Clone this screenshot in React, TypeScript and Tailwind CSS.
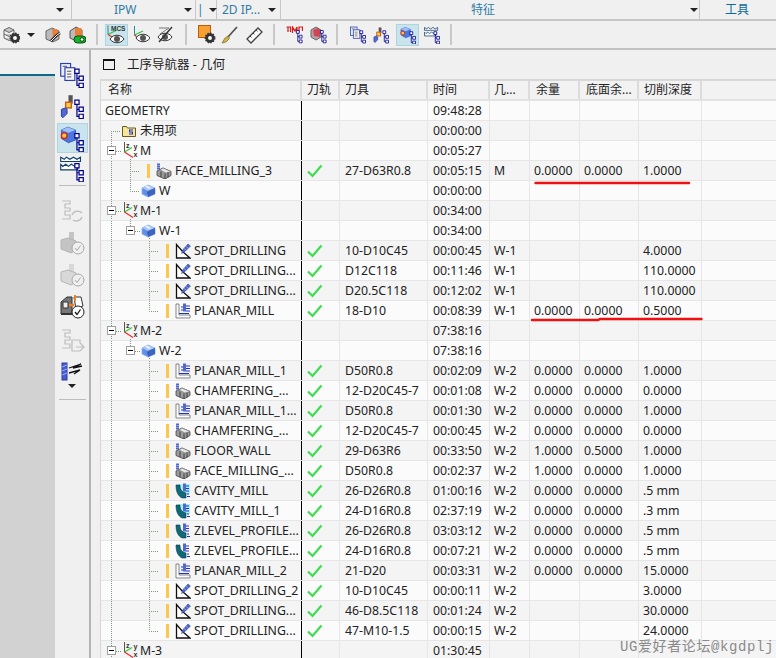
import React from "react";

const FONT = { fontFamily: '"Noto Sans","Noto Sans CJK SC",sans-serif' };

type Kind = "spot" | "planar" | "face" | "cavity" | "zlevel";
type Row = {
  n: string;
  k: "root" | "unused" | "mcs" | "wp" | "op";
  op?: Kind;
  t?: string;
  tm: string;
  g?: string;
  a?: string;
  b?: string;
  c?: string;
  lvl?: number;
};

const rows: Row[] = [
  { n: "GEOMETRY", k: "root", tm: "09:48:28" },
  { n: "未用项", k: "unused", tm: "00:00:00" },
  { n: "M", k: "mcs", tm: "00:05:27" },
  { n: "FACE_MILLING_3", k: "op", lvl: 1, op: "face", t: "27-D63R0.8", tm: "00:05:15", g: "M", a: "0.0000", b: "0.0000", c: "1.0000" },
  { n: "W", k: "wp", tm: "00:00:00" },
  { n: "M-1", k: "mcs", tm: "00:34:00" },
  { n: "W-1", k: "wp", tm: "00:34:00" },
  { n: "SPOT_DRILLING", k: "op", op: "spot", t: "10-D10C45", tm: "00:00:45", g: "W-1", c: "4.0000" },
  { n: "SPOT_DRILLING...", k: "op", op: "spot", t: "D12C118", tm: "00:11:46", g: "W-1", c: "110.0000" },
  { n: "SPOT_DRILLING...", k: "op", op: "spot", t: "D20.5C118", tm: "00:12:02", g: "W-1", c: "110.0000" },
  { n: "PLANAR_MILL", k: "op", op: "planar", t: "18-D10", tm: "00:08:39", g: "W-1", a: "0.0000", b: "0.0000", c: "0.5000" },
  { n: "M-2", k: "mcs", tm: "07:38:16" },
  { n: "W-2", k: "wp", tm: "07:38:16" },
  { n: "PLANAR_MILL_1", k: "op", op: "planar", t: "D50R0.8", tm: "00:02:09", g: "W-2", a: "0.0000", b: "0.0000", c: "1.0000" },
  { n: "CHAMFERING_...", k: "op", op: "face", t: "12-D20C45-7", tm: "00:01:08", g: "W-2", a: "0.0000", b: "0.0000", c: "0.0000" },
  { n: "PLANAR_MILL_1...", k: "op", op: "planar", t: "D50R0.8", tm: "00:01:30", g: "W-2", a: "0.0000", b: "0.0000", c: "1.0000" },
  { n: "CHAMFERING_...", k: "op", op: "face", t: "12-D20C45-7", tm: "00:00:45", g: "W-2", a: "0.0000", b: "0.0000", c: "0.0000" },
  { n: "FLOOR_WALL", k: "op", op: "face", t: "29-D63R6", tm: "00:33:50", g: "W-2", a: "1.0000", b: "0.5000", c: "1.0000" },
  { n: "FACE_MILLING_...", k: "op", op: "face", t: "D50R0.8", tm: "00:02:37", g: "W-2", a: "1.0000", b: "0.0000", c: "1.0000" },
  { n: "CAVITY_MILL", k: "op", op: "cavity", t: "26-D26R0.8", tm: "01:00:16", g: "W-2", a: "0.0000", b: "0.0000", c: ".5 mm" },
  { n: "CAVITY_MILL_1", k: "op", op: "cavity", t: "24-D16R0.8", tm: "02:37:19", g: "W-2", a: "0.0000", b: "0.0000", c: ".3 mm" },
  { n: "ZLEVEL_PROFILE...", k: "op", op: "zlevel", t: "26-D26R0.8", tm: "03:03:12", g: "W-2", a: "0.0000", b: "0.0000", c: ".5 mm" },
  { n: "ZLEVEL_PROFILE...", k: "op", op: "zlevel", t: "24-D16R0.8", tm: "00:07:21", g: "W-2", a: "0.0000", b: "0.0000", c: ".5 mm" },
  { n: "PLANAR_MILL_2", k: "op", op: "planar", t: "21-D20", tm: "00:03:31", g: "W-2", a: "0.0000", b: "0.0000", c: "15.0000" },
  { n: "SPOT_DRILLING_2", k: "op", op: "spot", t: "10-D10C45", tm: "00:00:11", g: "W-2", c: "3.0000" },
  { n: "SPOT_DRILLING...", k: "op", op: "spot", t: "46-D8.5C118", tm: "00:01:24", g: "W-2", c: "30.0000" },
  { n: "SPOT_DRILLING...", k: "op", op: "spot", t: "47-M10-1.5", tm: "00:00:15", g: "W-2", c: "24.0000" },
  { n: "M-3", k: "mcs", tm: "01:30:45" },
  { n: "", k: "root", tm: "" },
];

/* ---------- small icons ---------- */

function Tree({ c = "#00008b" }: { c?: string }) {
  return (
    <g fill="none" stroke={c} strokeWidth=".85">
      <path d="M4 3.500v8.500h1.500M4 7h1.500" />
      <path d="M2.500 .5h3v3h-3zM5.500 5.500h3v3h-3zM5.500 10.500h3v3h-3z" fill="#fff" />
    </g>
  );
}

function Axes() {
  const letter = { fontFamily: '"Liberation Sans",sans-serif', fontSize: 7, fontWeight: 700, fill: "#333" };
  return (
    <svg width="15" height="17" viewBox="0 0 15 17" className="shrink-0">
      <path d="M1.500 0v10" stroke="#555" strokeWidth="1" />
      <path d="M1.500 10 9 5.500" stroke="#3cc23c" strokeWidth="1.300" />
      <path d="M1.500 10 10 15.500" stroke="#e8303a" strokeWidth="1.300" />
      <text x="3" y="6" style={letter}>
        z
      </text>
      <text x="10.500" y="7" style={letter}>
        y
      </text>
      <text x="10.500" y="15" style={letter}>
        x
      </text>
    </svg>
  );
}

function Workpiece() {
  return (
    <svg width="15" height="15" viewBox="0 0 15 15" className="shrink-0">
      <path d="M1 5 7 2l7 3v6l-7 3-6-3z" fill="#5f8fe8" stroke="#8fb2ee" strokeWidth=".8" />
      <path d="M1 5l6 3 7-3-7-3z" fill="#a9c6f7" />
      <path d="M7 8v6l7-3V5z" fill="#3e66c0" />
      <path d="M4 3.500 8 6l2-1-4-2.500z" fill="#fff" opacity=".8" />
      <path d="M7 8.500v3" stroke="#29478f" strokeWidth="1" />
    </svg>
  );
}

function Folder() {
  return (
    <svg width="14" height="13" viewBox="0 0 14 13" className="shrink-0">
      <path d="M.5 2.500h4l1 1.500h8v8.500H.500z" fill="#f7e59a" stroke="#6a5a1a" />
      <path d="M7 5.500h4v1H8v1h3v3H7v-1h3v-1H7z" fill="#1f2fd0" />
    </svg>
  );
}

function OpIcon({ k }: { k: Kind }) {
  if (k === "spot")
    return (
      <svg width="16" height="16" viewBox="0 0 16 16" className="shrink-0">
        <path d="M1.500 1.500v13.500h13.500L8 9z" fill="#fff" stroke="#111" strokeWidth="1.300" />
        <path d="M6.500 10.500 8 6.500 13 1l2.500 2L10 8.500z" fill="#4f64c8" stroke="#33459f" strokeWidth=".5" />
        <path d="M9 5.500l2.500 2M11 3.500l2.500 2" stroke="#a8b6f0" strokeWidth=".7" />
      </svg>
    );
  if (k === "planar")
    return (
      <svg width="16" height="16" viewBox="0 0 16 16" className="shrink-0">
        <path d="M1 1v14h14v-3H4V1z" fill="#fff" stroke="#777" strokeWidth=".9" />
        <path d="M8 .500h3v8H8z" fill="#5168cc" />
        <path d="M6 4h2M6 7h2M11 3h4M11 5.500h4M11 8h4" stroke="#1a2fd8" strokeWidth="1" />
        <path d="M4 10.500h10" stroke="#1a2fd8" strokeWidth="1" />
      </svg>
    );
  if (k === "cavity" || k === "zlevel")
    return (
      <svg width="16" height="16" viewBox="0 0 16 16" className="shrink-0">
        {k === "cavity" && <path d="M3 1h12v10H3z" fill="#a6f0fa" />}
        <path d="M1 2h4c0 5 2 7 6 8v5H7C3 13 1 9 1 2z" fill="#0e6a78" stroke="#0a3b48" strokeWidth=".6" />
        <path d="M8 .500h3v8H8z" fill="#5168cc" />
        <path d="M11 3h3M11 5.500h3M11 8h3M12 11h2M12 13.500h3" stroke="#1a2fd8" strokeWidth="1" />
      </svg>
    );
  return (
    <svg width="16" height="16" viewBox="0 0 16 16" className="shrink-0">
      <path d="M1 .500h3v6H1z" fill="#5168cc" />
      <path d="M1 2.500h3M1 4.500h3" stroke="#a8b6f0" strokeWidth=".7" />
      <path d="M1 8 7 5l8 3.500v4L9 16l-8-3.500z" fill="#9c9c9c" stroke="#444" strokeWidth=".8" />
      <path d="M7 5 4 7l6 3 5-1.500z" fill="#e6e6e6" stroke="#666" strokeWidth=".5" />
      <path d="M9 10.500V16M5 8.500v5.500M12 9.500v5" stroke="#333" strokeWidth=".9" />
    </svg>
  );
}

function Check() {
  return (
    <svg width="16" height="14" viewBox="0 0 16 14" className="shrink-0">
      <path d="M1 7.500 5.500 12 14.500 1.500" fill="none" stroke="#3ddc51" strokeWidth="2.200" />
    </svg>
  );
}

function Caret({ className = "" }: { className?: string }) {
  return <span className={`inline-block w-0 h-0 border-l-[4px] border-r-[4px] border-t-[4px] border-l-transparent border-r-transparent border-t-[#222] ${className}`} />;
}

function Minus() {
  return (
    <span className="w-[9px] h-[9px] border border-[#a0a0a0] bg-white flex items-center justify-center shrink-0">
      <span className="w-[5px] h-px bg-black" />
    </span>
  );
}

function Warn() {
  return <span className="w-[2.5px] h-[14px] bg-[#fdc84a] shrink-0" />;
}

/* dotted tree guides of one row */
function Guides({ i, r }: { i: number; r: Row }) {
  const dot = "#7f9a7f";
  const segs: string[] = [];
  const lower = (x: number) => segs.push(`M${x}.5 0V20`);
  const y = 10.5;
  if (i >= 1 && i <= 28) {
    if (i === 1) segs.push(`M11.500 10V20M11 ${y}H21`);
    else if (r.k === "mcs") segs.push(`M11.500 0V6M11.500 15V20M16 ${y}H22`);
    else lower(11);
  }
  if (i === 2) segs.push("M30.500 18V20");
  if (i === 3) segs.push(`M30.500 0V20M30 ${y}H39`);
  if (i === 4) segs.push(`M30.500 0V${y}H39`);
  if (i === 5 || i === 11) segs.push("M30.500 18V20");
  if (r.k === "wp" && i !== 4) segs.push(`M30.500 0V6M35 ${y}H40M49.500 17V20`);
  if (i >= 7 && i <= 9) segs.push(`M49.500 0V20M49 ${y}H58`);
  if (i === 10 || i === 26) segs.push(`M49.500 0V${y}H58`);
  if (i >= 13 && i <= 25) segs.push(`M49.500 0V20M49 ${y}H58`);
  return (
    <svg width="70" height="20" className="absolute left-[-1px] top-0">
      <path d={segs.join("")} fill="none" stroke={dot} strokeWidth="1" strokeDasharray="1 1" />
    </svg>
  );
}

function NameCell({ r }: { r: Row }) {
  const text = <span className="whitespace-nowrap">{r.n}</span>;
  if (r.k === "root") return <div className="pl-[4px]">{text}</div>;
  if (r.k === "unused")
    return (
      <div className="pl-[21px] flex items-center gap-[4px]">
        <Folder />
        {text}
      </div>
    );
  if (r.k === "mcs")
    return (
      <div className="pl-[6px] flex items-center">
        <Minus />
        <span className="w-[7px]" />
        <Axes />
        <span className="w-[2px]" />
        {text}
      </div>
    );
  if (r.k === "wp")
    return (
      <div className={r.n === "W" ? "pl-[40px] flex items-center gap-[3px]" : "pl-[25px] flex items-center"}>
        {r.n !== "W" && <Minus />}
        {r.n !== "W" && <span className="w-[6px]" />}
        <Workpiece />
        {r.n !== "W" && <span className="w-[3px]" />}
        {text}
      </div>
    );
  const left = r.lvl === 1 ? "pl-[46px]" : "pl-[65px]";
  return (
    <div className={`${left} flex items-center`}>
      <Warn />
      <span className="w-[6.5px]" />
      <OpIcon k={r.op as Kind} />
      <span className="w-[3px]" />
      {text}
    </div>
  );
}

const cols = ["w-[40px]", "w-[50px]", "w-[59px]", "w-[63px]"];

function TableRow({ r, i }: { r: Row; i: number }) {
  const cell = "h-full flex items-center border-r border-[#e6e6e6] shrink-0";
  return (
    <div className={`flex h-5 border-b border-[#e6e6e6] text-[12.3px] leading-[12px] ${i % 2 ? "bg-[#f4f4f4]" : "bg-[#fbfbfb]"}`}>
      <div className="relative w-[201px] h-full flex items-center shrink-0 overflow-hidden border-r border-black">
        <Guides i={i} r={r} />
        <div className="relative">
          <NameCell r={r} />
        </div>
      </div>
      <div className={`${cell} w-[38px] pl-[5px]`}>{r.t && <Check />}</div>
      <div className={`${cell} w-[88px] pl-[5px]`}>{r.t}</div>
      <div className={`${cell} w-[62px] pl-[5px]`}>{r.tm}</div>
      <div className={`${cell} ${cols[0]} pl-[4px]`}>{r.g}</div>
      <div className={`${cell} ${cols[1]} pl-[4px]`}>{r.a}</div>
      <div className={`${cell} ${cols[2]} pl-[4px]`}>{r.b}</div>
      <div className={`${cell} ${cols[3]} pl-[4px]`}>{r.c}</div>
    </div>
  );
}

function HeaderCell({ children, w, pl = "pl-[5px]" }: { children?: React.ReactNode; w: string; pl?: string }) {
  return <div className={`${w} ${pl} h-full flex items-center border-r-2 border-[#dcdcdc] shrink-0 whitespace-nowrap`}>{children}</div>;
}

/* ---------- toolbar icons ---------- */

function Gear({ x, y, r = 3.5 }: { x: number; y: number; r?: number }) {
  return (
    <g>
      <circle cx={x} cy={y} r={r + 1.2} fill="#333" stroke="#333" strokeDasharray="1.500 1.200" strokeWidth="1.500" />
      <circle cx={x} cy={y} r={r * 0.55} fill="#fff" />
    </g>
  );
}

function Eye({ x = 0, y = 0 }: { x?: number; y?: number }) {
  return (
    <g transform={`translate(${x} ${y})`}>
      <path d="M0 5C3 0 11 0 14 5 11 10 3 10 0 5z" fill="#fff" stroke="#333" />
      <circle cx="7" cy="5" r="3" fill="#555" />
    </g>
  );
}

function Box({ w = 16, h = 18, children }: { w?: number; h?: number; children: React.ReactNode }) {
  return (
    <svg width={w} height={h} viewBox={`0 0 ${w} ${h}`} className="shrink-0">
      {children}
    </svg>
  );
}

const Sep = () => <span className="w-[2px] h-[21px] bg-[#c8c8c8] shrink-0" />;
const Active = ({ children }: { children: React.ReactNode }) => (
  <span className="w-[23px] h-[22px] bg-[#c9e4ec] border border-[#b0d4df] flex items-center justify-center shrink-0">{children}</span>
);

function StackGear() {
  return (
    <Box w={17} h={18}>
      <path d="M1 4 6 1.500 11 4 6 6.500zM1 8l5 2.500L11 8M1 12l5 2.500L11 12M1 4v8M11 4v3" fill="#c8c8c8" stroke="#666" />
      <Gear x={12} y={12} />
    </Box>
  );
}
function WrenchBox() {
  return (
    <Box w={17} h={18}>
      <path d="M1 5 7 2l7 3v8l-6 3-7-3z" fill="#bbb" stroke="#666" />
      <path d="M7 3h5l1 2v6l-5 2z" fill="#e8803a" />
      <path d="M15 7 12 9 8 13 6 15" stroke="#222" strokeWidth="2.600" fill="none" />
      <path d="M15 7 12 9 8 13 6 15" stroke="#fff" strokeWidth="1" fill="none" />
    </Box>
  );
}
function GreenBox() {
  return (
    <Box w={17} h={18}>
      <path d="M1 5 7 1l6 3v8l-6 3-6-3z" fill="#bbb" stroke="#555" />
      <path d="M6 2h6l1 2v6H6z" fill="#e8803a" />
      <rect x="5" y="10" width="12" height="7" rx="3.500" fill="#12b52a" stroke="#0a4a12" />
      <circle cx="13" cy="13.500" r="1.800" fill="#fff" stroke="#0a4a12" />
    </Box>
  );
}
function McsEye() {
  return (
    <Box w={21} h={20}>
      <path d="M2 .500v9" stroke="#1f8f8f" />
      <path d="M2 9.500 11 5" stroke="#2fbf3f" strokeWidth="1.200" />
      <path d="M2 9.500l5 3" stroke="#e83030" strokeWidth="1.200" />
      <text x="5" y="6" fontSize="6.500" fontWeight="700" fill="#333" style={{ fontFamily: '"Liberation Sans",sans-serif' }}>
        MCS
      </text>
      <Eye x={4} y={9} />
    </Box>
  );
}
function AxisEye() {
  return (
    <Box w={17} h={18}>
      <path d="M1.500 0v9" stroke="#1f8f8f" />
      <path d="M1.500 9 10 5" stroke="#2fbf3f" strokeWidth="1.200" />
      <path d="M1.500 9l5 4" stroke="#e83030" strokeWidth="1.200" />
      <Eye x={3} y={7} />
    </Box>
  );
}
function SlashEye() {
  return (
    <Box w={17} h={18}>
      <path d="M2 2h10L3 8" fill="none" stroke="#777" />
      <Eye x={1} y={6} />
      <path d="M15 1 2 16" stroke="#333" strokeWidth="1.400" />
    </Box>
  );
}
function OrangeGear() {
  return (
    <Box w={18} h={19}>
      <rect x=".5" y=".5" width="12" height="12" fill="#f5a030" stroke="#c05a08" />
      <Gear x={12} y={13} />
    </Box>
  );
}
function Brush() {
  return (
    <Box w={17} h={18}>
      <path d="M16 1 7 11" stroke="#555" strokeWidth="1.800" />
      <path d="M7 10 4 12 1 17c3 0 6-2 7.500-5z" fill="#cdb24a" stroke="#7a6a20" strokeWidth=".7" />
    </Box>
  );
}
function Ruler() {
  return (
    <Box w={17} h={18}>
      <path d="M1 13 12 2l4 4L5 17z" fill="#fff" stroke="#444" strokeWidth="1.300" />
      <path d="M4 10l1.500 1.500M7 7l1.500 1.500M10 4l1.500 1.500" stroke="#444" />
    </Box>
  );
}
function RedTree() {
  return (
    <Box w={17} h={18}>
      <path d="M.5 1h4v5M2 1v5M6.500 7V1l2.500 4 2-4v5M13 6V1h3.500v4" fill="none" stroke="#d81818" strokeWidth="1.200" />
      <g transform="translate(8 4) scale(.95)">
        <Tree />
      </g>
    </Box>
  );
}
function RedCubeTree() {
  return (
    <Box w={17} h={18}>
      <path d="M1 4 6 1l5 3v7l-5 3-5-3z" fill="#b8a0a8" stroke="#666" />
      <path d="M3 4l5-2 3 3-1 6-6-1z" fill="#d82838" opacity=".75" />
      <g transform="translate(8 4) scale(.95)">
        <Tree />
      </g>
    </Box>
  );
}
function PagesTree({ s = 1 }: { s?: number }) {
  return (
    <svg width={16 * s} height={18 * s} viewBox="0 0 17 18" className="shrink-0">
      <rect x=".5" y=".5" width="7" height="9" fill="#e4eefc" stroke="#2b3da8" strokeWidth=".8" />
      <rect x="3.500" y="3.500" width="7" height="9" fill="#f4f4f8" stroke="#2b3da8" strokeWidth=".8" />
      <path d="M2 2.500h3M5 6h3M5 8h3M5 10h3" stroke="#555" strokeWidth=".7" />
      <g transform="translate(8 4)">
        <Tree />
      </g>
    </svg>
  );
}
function ToolTree({ s = 1 }: { s?: number }) {
  return (
    <svg width={16 * s} height={18 * s} viewBox="0 0 17 18" className="shrink-0">
      <path d="M6 1h3v6H6z" fill="#555" />
      <rect x="4" y="6" width="4" height="4" fill="#f4d040" stroke="#d0581a" />
      <path d="M1 11l3-1 1 1v3l-3 3-1-1z" fill="#5168cc" stroke="#2b3da8" strokeWidth=".7" />
      <g transform="translate(8 4)">
        <Tree />
      </g>
    </svg>
  );
}
function CubeTree({ s = 1 }: { s?: number }) {
  return (
    <svg width={16 * s} height={18 * s} viewBox="0 0 17 18" className="shrink-0">
      <path d="M1 3 5.500 1 11 3v7l-5 2-5-3z" fill="#4a78e0" stroke="#2f52b8" strokeWidth=".6" />
      <path d="M1 3l5 2 5-2-5.500-2z" fill="#9fc0f5" />
      <circle cx="3" cy="7" r="2" fill="#f4d040" stroke="#e02020" />
      <g transform="translate(8 5)">
        <Tree />
      </g>
    </svg>
  );
}
function CrownTree({ s = 1 }: { s?: number }) {
  return (
    <svg width={16 * s} height={18 * s} viewBox="0 0 17 18" className="shrink-0">
      <path d="M.5 1v3h14V1L12 2.500 9.500 1 7 2.500 4.500 1 3 2.500z" fill="#fff" stroke="#0f3d6e" strokeWidth=".8" />
      <path d="M.5 6v4h12V6l-2 1.500L8 6 6 7.500 4 6 2 7.500z" fill="#fff" stroke="#0f3d6e" strokeWidth=".8" />
      <g transform="translate(8 5)">
        <Tree />
      </g>
    </svg>
  );
}

/* ---------- vertical strip icons (grey states) ---------- */
function GreySteps({ kind }: { kind: "sync" | "out" }) {
  return (
    <Box w={25} h={24}>
      <path d="M2 1h8v3H5v4h5v3H5v4h5v4H2" fill="none" stroke="#bdbdbd" strokeWidth="1.200" />
      {kind === "sync" ? (
        <path d="M22 13a6 6 0 0 0-10 2M13 20a6 6 0 0 0 9-3" fill="none" stroke="#bdbdbd" strokeWidth="1.400" />
      ) : (
        <path d="M12 11h8v3l4 4-4 4v0h-8zM16 18h7" fill="none" stroke="#bdbdbd" strokeWidth="1.200" />
      )}
    </Box>
  );
}
function GreyMachine({ light }: { light?: boolean }) {
  const f = light ? "#d8d8d8" : "#c4c4c4";
  return (
    <Box w={25} h={24}>
      <path d="M9 1h5v9H9z" fill={f} />
      <path d="M1 9l7-2 8 3v9l-5 3-10-4z" fill={f} stroke="#b5b5b5" />
      <circle cx="18" cy="17" r="6" fill="#f0f0f0" stroke="#a8a8a8" />
      <path d="M15 17l2 2.500 3.500-5" fill="none" stroke="#a8a8a8" />
    </Box>
  );
}
function MachineCheck() {
  return (
    <Box w={25} h={25}>
      <path d="M1 8l6-5h5v17H1z" fill="#777" stroke="#333" />
      <path d="M3 8h5v6H3z" fill="#eee" stroke="#333" />
      <path d="M14 3h2l5 0 2 9-7 3z" fill="#fff" stroke="#333" />
      <path d="M15 1v6" stroke="#f08020" strokeWidth="2" />
      <path d="M9 11h5" stroke="#f08020" strokeWidth="2.500" />
      <path d="M1 20h16" stroke="#333" strokeWidth="2" />
      <circle cx="18" cy="18" r="6" fill="#fff" stroke="#222" />
      <path d="M15 18l2 2.500 3.500-5" fill="none" stroke="#111" strokeWidth="1.300" />
    </Box>
  );
}
function DrillLines() {
  return (
    <Box w={24} h={19}>
      <rect x="2" y="1" width="5" height="17" fill="#4a5ecc" stroke="#2b3da8" />
      <path d="M2 5l5-2M2 9l5-2M2 13l5-2" stroke="#9fb0f0" />
      <path d="M9 6l12-4-8 4 9-2M9 11l11-3-6 4" fill="none" stroke="#111" strokeWidth="1.300" />
    </Box>
  );
}

/* ---------- page ---------- */

export default function App() {
  return (
    <div className="relative w-[776px] h-[658px] overflow-hidden bg-[#f0f0f0] text-[12px] leading-none text-[#222]" style={FONT}>
      {/* ribbon group titles */}
      <div className="h-[21px] flex border-b-2 border-[#c6c6c6] text-[#2f7ba5]">
        <div className="w-[72px] h-[19px] border-r border-[#c8c8c8] flex items-center justify-end pr-[7px]">
          <Caret />
        </div>
        <div className="w-[124px] h-[19px] border-r border-[#c8c8c8] flex items-center pl-[42px]">
          <span>IPW</span>
          <Caret className="ml-[47px]" />
        </div>
        <div className="w-[21px] h-[19px] border-r border-[#c8c8c8] flex items-center pl-[1px]">
          <span>|</span>
          <Caret className="ml-[5px]" />
        </div>
        <div className="w-[64px] h-[19px] border-r border-[#c8c8c8] flex items-center pl-[5px]">
          <span className="whitespace-nowrap">2D IP...</span>
          <Caret className="ml-[8px]" />
        </div>
        <div className="w-[419px] h-[19px] border-r border-[#c8c8c8] flex items-center pl-[190px]">
          <span>特征</span>
          <Caret className="ml-[195px]" />
        </div>
        <div className="flex-1 h-[19px] flex items-center pl-[25px] text-[#0f6a98]">工具</div>
      </div>

      {/* toolbar */}
      <div className="h-[29px] flex items-center pl-[3px] border-b-2 border-[#c2c2c2]">
        <StackGear />
        <Caret className="ml-[7px]" />
        <span className="w-[10px]" />
        <WrenchBox />
        <span className="w-[7px]" />
        <GreenBox />
        <span className="w-[10px]" />
        <Sep />
        <span className="w-[7px]" />
        <Active>
          <McsEye />
        </Active>
        <span className="w-[5px]" />
        <AxisEye />
        <span className="w-[7px]" />
        <SlashEye />
        <span className="w-[11px]" />
        <Sep />
        <span className="w-[11px]" />
        <OrangeGear />
        <span className="w-[5px]" />
        <Brush />
        <span className="w-[8px]" />
        <Ruler />
        <span className="w-[10px]" />
        <Sep />
        <span className="w-[11px]" />
        <RedTree />
        <span className="w-[7px]" />
        <RedCubeTree />
        <span className="w-[9px]" />
        <Sep />
        <span className="w-[12px]" />
        <PagesTree />
        <span className="w-[7px]" />
        <ToolTree />
        <span className="w-[7px]" />
        <Active>
          <CubeTree />
        </Active>
        <span className="w-[5px]" />
        <CrownTree />
        <span className="w-[10px]" />
        <Sep />
      </div>

      <div className="flex h-[608px]">
        {/* graphics window edge */}
        <div className="w-[55px] shrink-0 flex flex-col">
          <div className="h-[24px] bg-[#f0f0f0]" />
          <div className="h-[2px] bg-[#0e6a8a]" />
          <div className="flex-1 bg-[#d2d2d2]" />
        </div>

        {/* resource strip */}
        <div className="w-[36px] shrink-0 border-r-2 border-[#b4b4b4] flex flex-col items-center pt-[12px]">
          <PagesTree s={1.5} />
          <div className="mt-[4px]">
            <ToolTree s={1.5} />
          </div>
          <div className="mt-[3px] w-[31px] h-[30px] bg-[#c9e4ec] border border-[#b0d4df] flex items-center justify-center">
            <CubeTree s={1.5} />
          </div>
          <div className="mt-[2px]">
            <CrownTree s={1.5} />
          </div>
          <span className="mt-[3px] w-[27px] h-[1px] bg-[#bcbcbc]" />
          <div className="mt-[14px]">
            <GreySteps kind="sync" />
          </div>
          <div className="mt-[7px]">
            <GreyMachine />
          </div>
          <div className="mt-[8px]">
            <GreyMachine light />
          </div>
          <div className="mt-[7px]">
            <MachineCheck />
          </div>
          <div className="mt-[10px]">
            <GreySteps kind="out" />
          </div>
          <div className="mt-[9px]">
            <DrillLines />
          </div>
          <Caret className="mt-[3px]" />
          <span className="mt-[11px] w-[27px] h-[1px] bg-[#bcbcbc]" />
        </div>

        {/* operation navigator */}
        <div className="flex-1 min-w-0 flex flex-col pl-[9px]">
          <div className="h-[29px] flex items-center pl-[3px] shrink-0">
            <span className="w-[12px] h-[11px] border border-[#111] border-t-2" />
            <span className="ml-[12px] whitespace-nowrap text-[12.5px] leading-[12px]">工序导航器 - 几何</span>
          </div>
          <div className="flex-1 border-l border-t-2 border-[#d8d8d8] bg-[#fbfbfb] overflow-hidden">
            <div className="h-[20px] flex items-center border-b-2 border-[#e2e2e2] bg-[#f2f2f2]">
              <HeaderCell w="w-[201px]" pl="pl-[7px]">
                名称
              </HeaderCell>
              <HeaderCell w="w-[38px]">刀轨</HeaderCell>
              <HeaderCell w="w-[88px]">刀具</HeaderCell>
              <HeaderCell w="w-[62px]">时间</HeaderCell>
              <HeaderCell w="w-[40px]" pl="pl-[4px]">
                几...
              </HeaderCell>
              <HeaderCell w="w-[50px]" pl="pl-[6px]">
                余量
              </HeaderCell>
              <HeaderCell w="w-[59px]" pl="pl-[6px]">
                底面余...
              </HeaderCell>
              <HeaderCell w="w-[63px]" pl="pl-[5px]">
                切削深度
              </HeaderCell>
            </div>
            {rows.map((r, i) => (
              <TableRow key={i} r={r} i={i} />
            ))}
          </div>
        </div>
      </div>

      {/* hand-drawn red marks over the table */}
      <svg width="776" height="658" className="absolute left-0 top-0 pointer-events-none">
        <path d="M535.500 183H689" stroke="#f01010" strokeWidth="2.400" strokeLinecap="round" fill="none" />
        <path d="M532 320H598L600 319H701.500" stroke="#f01010" strokeWidth="2.400" strokeLinecap="round" fill="none" />
      </svg>

      {/* forum watermark */}
      <div
        className="absolute left-[620px] top-[638px] text-[14px] leading-[18px] tracking-[0.6px] text-[#8a8a8a] whitespace-nowrap"
        style={{ fontFamily: '"Liberation Mono","Noto Sans CJK SC",monospace' }}
      >
        UG爱好者论坛@kgdplj
      </div>
    </div>
  );
}
